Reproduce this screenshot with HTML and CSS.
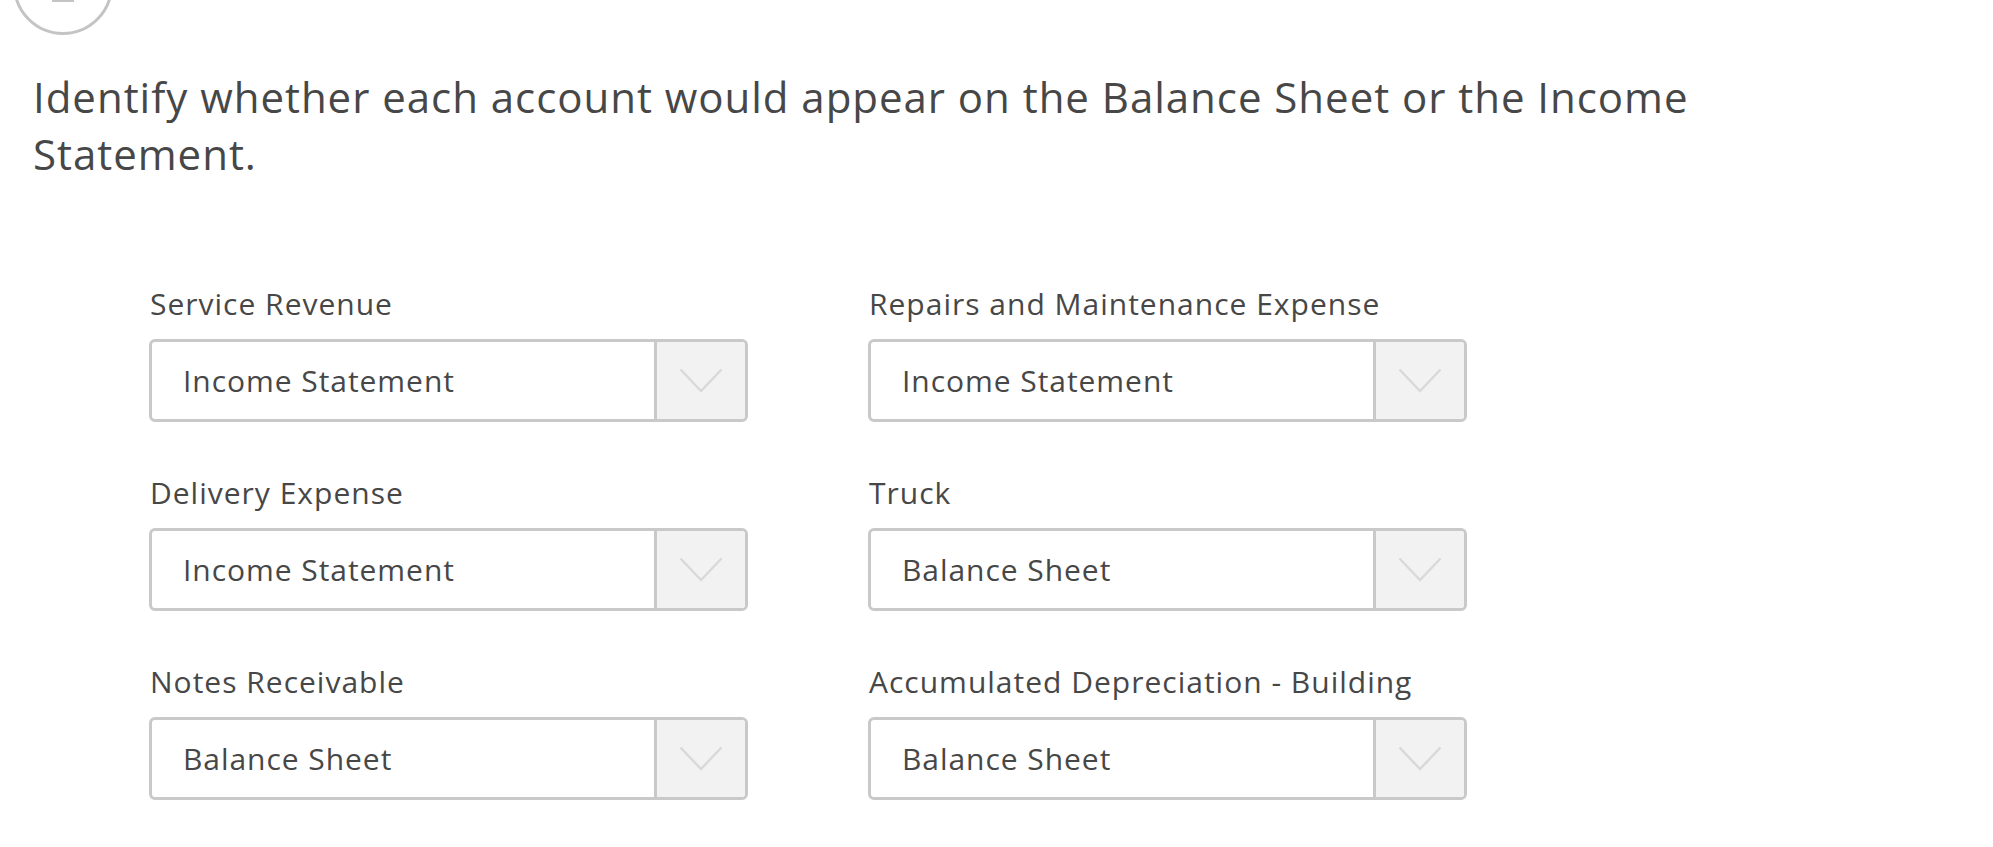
FILE: index.html
```html
<!DOCTYPE html>
<html lang="en">
<head>
<meta charset="utf-8">
<title>Balance Sheet or Income Statement</title>
<link rel="stylesheet" href="styles.css">
</head>
<body>
<div class="page">
  <div class="step-circle"><span class="step-mark"></span></div>
  <h1 class="prompt">Identify whether each account would appear on the Balance Sheet or the Income Statement.</h1>
  <div class="fields">
    <div class="field">
      <div class="field-label">Service Revenue</div>
      <div class="select">
        <div class="select-value">Income Statement</div>
        <div class="select-arrow"><svg width="44" height="25" viewBox="0 0 44 25"><polyline points="1.5,1.5 22,23 42.5,1.5" fill="none" stroke="#d9d9d9" stroke-width="2.5"/></svg></div>
      </div>
    </div>
    <div class="field">
      <div class="field-label">Repairs and Maintenance Expense</div>
      <div class="select">
        <div class="select-value">Income Statement</div>
        <div class="select-arrow"><svg width="44" height="25" viewBox="0 0 44 25"><polyline points="1.5,1.5 22,23 42.5,1.5" fill="none" stroke="#d9d9d9" stroke-width="2.5"/></svg></div>
      </div>
    </div>
    <div class="field">
      <div class="field-label">Delivery Expense</div>
      <div class="select">
        <div class="select-value">Income Statement</div>
        <div class="select-arrow"><svg width="44" height="25" viewBox="0 0 44 25"><polyline points="1.5,1.5 22,23 42.5,1.5" fill="none" stroke="#d9d9d9" stroke-width="2.5"/></svg></div>
      </div>
    </div>
    <div class="field">
      <div class="field-label">Truck</div>
      <div class="select">
        <div class="select-value">Balance Sheet</div>
        <div class="select-arrow"><svg width="44" height="25" viewBox="0 0 44 25"><polyline points="1.5,1.5 22,23 42.5,1.5" fill="none" stroke="#d9d9d9" stroke-width="2.5"/></svg></div>
      </div>
    </div>
    <div class="field">
      <div class="field-label">Notes Receivable</div>
      <div class="select">
        <div class="select-value">Balance Sheet</div>
        <div class="select-arrow"><svg width="44" height="25" viewBox="0 0 44 25"><polyline points="1.5,1.5 22,23 42.5,1.5" fill="none" stroke="#d9d9d9" stroke-width="2.5"/></svg></div>
      </div>
    </div>
    <div class="field">
      <div class="field-label">Accumulated Depreciation - Building</div>
      <div class="select">
        <div class="select-value">Balance Sheet</div>
        <div class="select-arrow"><svg width="44" height="25" viewBox="0 0 44 25"><polyline points="1.5,1.5 22,23 42.5,1.5" fill="none" stroke="#d9d9d9" stroke-width="2.5"/></svg></div>
      </div>
    </div>
  </div>
</div>
</body>
</html>
```

FILE: styles.css
```css
html, body {
  margin: 0;
  padding: 0;
  background: #ffffff;
}

body {
  font-family: "Open Sans", "Liberation Sans", sans-serif;
  color: #474747;
  overflow: hidden;
}

.page {
  display: flex;
  flex-direction: column;
}

.step-circle {
  box-sizing: border-box;
  width: 100px;
  height: 100px;
  margin-top: -65px;
  margin-left: 13px;
  border: 3.5px solid #c4c4c4;
  border-radius: 50%;
  display: flex;
  flex-direction: column;
  align-items: center;
  padding-top: 61px;
}

.step-mark {
  display: block;
  width: 22px;
  height: 3px;
  background: #c4c4c4;
}

.prompt {
  margin: 33px 0 0 33px;
  max-width: 1720px;
  font-size: 42px;
  line-height: 57px;
  letter-spacing: 0.97px;
  font-weight: 400;
}

.fields {
  margin: 102px 0 0 149px;
  display: grid;
  grid-template-columns: 599px 599px;
  column-gap: 120px;
  row-gap: 51px;
}

.field {
  display: flex;
  flex-direction: column;
}

.field-label {
  font-size: 30px;
  line-height: 38px;
  letter-spacing: 1px;
  padding-top: 1px;
  margin-bottom: 16px;
  padding-left: 1px;
}

.select {
  box-sizing: border-box;
  height: 83px;
  border: 3px solid #c9c9c9;
  border-radius: 6px;
  display: flex;
  overflow: hidden;
  background: #ffffff;
}

.select-value {
  flex: 1;
  display: flex;
  align-items: center;
  padding-left: 31px;
  font-size: 30px;
  letter-spacing: 0.95px;
}

.select-arrow {
  width: 88px;
  border-left: 3px solid #c9c9c9;
  background: #f2f2f2;
  display: flex;
  align-items: center;
  justify-content: center;
}
```
